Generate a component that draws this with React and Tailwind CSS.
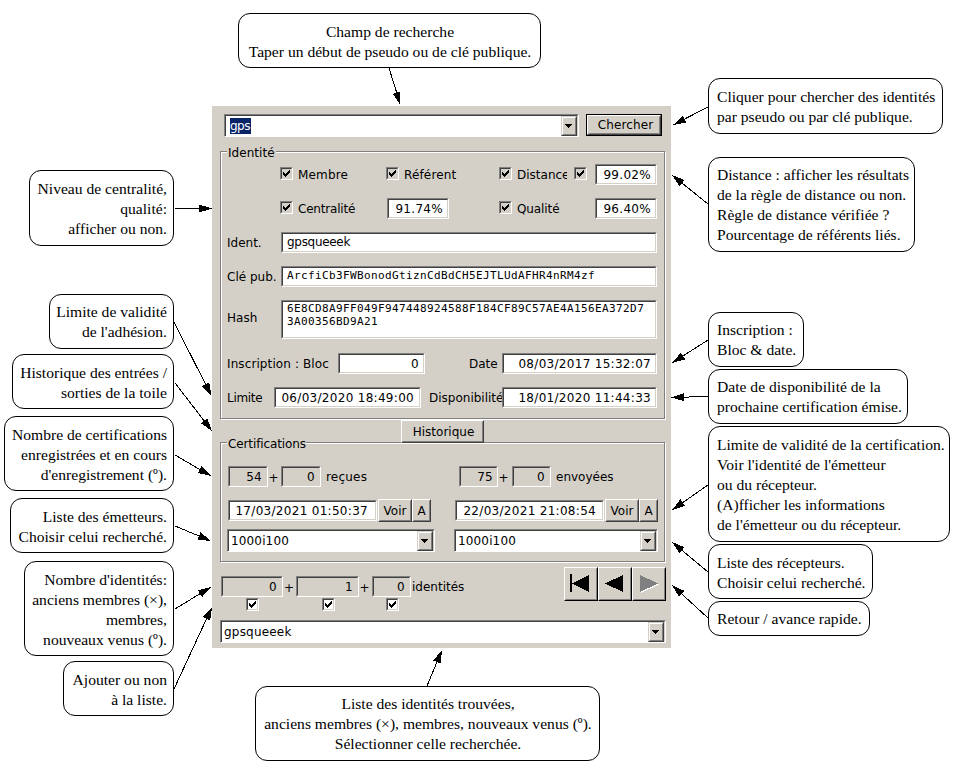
import React from "react";

function Callout({ lines, className }) {
  return (
    <div
      className={`shrink-0 rounded-[12px] border border-black bg-white font-['Liberation_Serif',serif] text-[15.6px] leading-[20px] whitespace-nowrap ${className}`}
    >
      {lines.map((line) => (
        <div key={line}>{line}</div>
      ))}
    </div>
  );
}

function Arrow({ from, to }) {
  const [x1, y1] = from;
  const [x2, y2] = to;
  const len = Math.hypot(x2 - x1, y2 - y1);
  const ux = (x2 - x1) / len;
  const uy = (y2 - y1) / len;
  const bx = x2 - ux * 13;
  const by = y2 - uy * 13;
  const points = `${x2},${y2} ${bx - uy * 4},${by + ux * 4} ${bx + uy * 4},${by - ux * 4}`;
  return (
    <g>
      <line x1={x1} y1={y1} x2={bx} y2={by} stroke="black" strokeWidth="1" />
      <polygon points={points} fill="black" />
    </g>
  );
}

const SUNKEN =
  "border border-t-[#808080] border-l-[#808080] border-r-white border-b-white";
const SUNKEN_INNER =
  "h-full w-full border border-t-[#404040] border-l-[#404040] border-r-[#d4d0c8] border-b-[#d4d0c8]";

function Field({ children, className = "", inner = "" }) {
  return (
    <div className={`shrink-0 ${SUNKEN} ${className}`}>
      <div className={`${SUNKEN_INNER} overflow-hidden whitespace-nowrap ${inner}`}>{children}</div>
    </div>
  );
}

function Check({ className = "bg-white" }) {
  return (
    <div className={`h-[13px] w-[13px] shrink-0 overflow-hidden ${SUNKEN} ${className}`}>
      <div className={SUNKEN_INNER}>
        <svg width="9" height="9" viewBox="0 0 9 9" shapeRendering="crispEdges" className="block">
          <path
            d="M1 3h1v3h-1zM2 4h1v3h-1zM3 5h1v3h-1zM4 4h1v3h-1zM5 3h1v3h-1zM6 2h1v3h-1zM7 1h1v3h-1z"
            fill="black"
          />
        </svg>
      </div>
    </div>
  );
}

function Combo({ children, className = "" }) {
  return (
    <div className={`shrink-0 bg-white ${SUNKEN} border-b-[#d4d0c8] ${className}`}>
      <div className="flex h-full items-center justify-between border-t border-r border-l border-t-[#404040] border-r-[#d4d0c8] border-l-[#404040] pl-[2px]">
        {children}
        <div className="h-full w-[16px] shrink-0 border border-t-[#d4d0c8] border-r-[#404040] border-b-[#404040] border-l-[#d4d0c8] bg-[#d4d0c8]">
          <div className="flex h-full w-full items-center justify-center border border-t-white border-r-[#808080] border-b-[#808080] border-l-white pr-[2px]">
            <svg width="7" height="4" viewBox="0 0 7 4" shapeRendering="crispEdges" className="shrink-0">
              <path d="M0 0h7v1h-7zM1 1h5v1h-5zM2 2h3v1h-3zM3 3h1v1h-1z" fill="black" />
            </svg>
          </div>
        </div>
      </div>
    </div>
  );
}

function Button({ children, className = "" }) {
  return (
    <div
      className={`shrink-0 border border-t-white border-r-[#404040] border-b-[#404040] border-l-white bg-[#d4d0c8] ${className}`}
    >
      <div className="flex h-full w-full items-center justify-center border border-t-[#d4d0c8] border-r-[#808080] border-b-[#808080] border-l-[#d4d0c8] whitespace-nowrap">
        {children}
      </div>
    </div>
  );
}

function Group({ title, titleClass, className, children }) {
  return (
    <div
      className={`relative border border-[#808080] shadow-[1px_1px_0_white,inset_1px_1px_0_white] ${className}`}
    >
      <div
        className={`absolute left-[6px] top-[-7px] h-[16px] bg-[#d4d0c8] pl-px leading-[16px] whitespace-nowrap ${titleClass}`}
      >
        {title}
      </div>
      {children}
    </div>
  );
}

const LABEL = "shrink-0 whitespace-nowrap";
const NUM = "tracking-[0.3px] flex items-center justify-end";

function Window() {
  return (
    <div className="mt-[38px] h-[542px] w-[459px] bg-[#d4d0c8] pt-[8px] pl-[8px] font-['DejaVu_Sans',sans-serif] text-[12px] leading-[16px] text-black">
      <div className="flex pl-[4px]">
        <Combo className="h-[23px] w-[355px]">
          <span className="ml-[2px] w-[21px] bg-[#0a246a] tracking-[-0.5px] text-white">gps</span>
          <span className="grow" />
        </Combo>
        <div className="ml-[7px] h-[22px] w-[76px] border border-black">
          <Button className="h-full w-full">
            <span className="ml-[3px] tracking-[0.1px]">Chercher</span>
          </Button>
        </div>
      </div>

      <Group title="Identité" titleClass="w-[49px] tracking-[0.05px]" className="mt-[14px] h-[268px] w-[445px] pt-[12px]">
        <div className="flex h-[21px] items-center pl-[59px]">
          <Check className="mt-[-2px] bg-[#d4d0c8]" />
          <span className={`${LABEL} ml-[5px] w-[88px] tracking-[0.15px]`}>Membre</span>
          <Check className="mt-[-2px] bg-[#d4d0c8]" />
          <span className={`${LABEL} ml-[5px] w-[95px] tracking-[0.15px]`}>Référent</span>
          <Check className="mt-[-2px]" />
          <span className={`${LABEL} ml-[5px] w-[50px] overflow-hidden`}>Distance</span>
          <Check className="mt-[-2px] ml-[7px] bg-[#d4d0c8]" />
          <Field className="ml-[8px] h-[21px] w-[62px] bg-white" inner={`${NUM} pr-[4px]`}>99.02%</Field>
        </div>
        <div className="mt-[13px] flex h-[21px] items-center pl-[59px]">
          <Check className="mt-[-2px]" />
          <span className={`${LABEL} ml-[5px] w-[89px] tracking-[-0.2px]`}>Centralité</span>
          <Field className="h-[21px] w-[62px] bg-white" inner={`${NUM} pr-[4px]`}>91.74%</Field>
          <Check className="mt-[-2px] ml-[50px]" />
          <span className={`${LABEL} ml-[5px] w-[78px] tracking-[-0.1px]`}>Qualité</span>
          <Field className="h-[21px] w-[62px] bg-white" inner={`${NUM} pr-[4px]`}>96.40%</Field>
        </div>
        <div className="mt-[13px] flex h-[21px] items-center pl-[6px]">
          <span className={`${LABEL} w-[54px] pt-px`}>Ident.</span>
          <Field className="h-[21px] w-[376px] bg-white" inner="pl-[4px] tracking-[-0.3px]">gpsqueeek</Field>
        </div>
        <div className="mt-[13px] flex h-[21px] items-center pl-[6px]">
          <span className={`${LABEL} w-[54px] pt-px`}>Clé pub.</span>
          <Field
            className="h-[21px] w-[376px] bg-white"
            inner="pl-[4px] font-['DejaVu_Sans_Mono',monospace] text-[11px] leading-[15px] tracking-[0.38px]"
          >
            ArcfiCb3FWBonodGtiznCdBdCH5EJTLUdAFHR4nRM4zf
          </Field>
        </div>
        <div className="mt-[13px] flex h-[39px] items-center pl-[6px]">
          <span className={`${LABEL} mt-[-3px] w-[54px]`}>Hash</span>
          <Field
            className="h-[39px] w-[376px] bg-white"
            inner="pl-[4px] font-['DejaVu_Sans_Mono',monospace] text-[11px] leading-[13px] tracking-[0.38px]"
          >
            <div>6E8CD8A9FF049F947448924588F184CF89C57AE4A156EA372D7</div>
            <div>3A00356BD9A21</div>
          </Field>
        </div>
        <div className="mt-[14px] flex h-[21px] items-center pl-[6px]">
          <span className={`${LABEL} w-[111px] pt-px tracking-[0.1px]`}>Inscription : Bloc</span>
          <Field className="h-[21px] w-[87px] bg-white" inner={`${NUM} pr-[4px]`}>0</Field>
          <span className={`${LABEL} ml-[44px] w-[33px] pt-px`}>Date</span>
          <Field className="h-[21px] w-[155px] bg-white" inner={`${NUM} pr-[4px]`}>08/03/2017 15:32:07</Field>
        </div>
        <div className="mt-[13px] flex h-[21px] items-center pl-[6px]">
          <span className={`${LABEL} w-[47px] tracking-[-0.3px] pt-px`}>Limite</span>
          <Field className="h-[21px] w-[147px] bg-white" inner={`${NUM} pr-[5px]`}>06/03/2020 18:49:00</Field>
          <span className={`${LABEL} ml-[8px] w-[73px] overflow-hidden pt-px`}>Disponibilité</span>
          <Field className="h-[21px] w-[155px] bg-white" inner={`${NUM} pr-[4px]`}>18/01/2020 11:44:33</Field>
        </div>
      </Group>

      <div className="relative z-10 mt-px ml-[181px] h-[23px] w-[83px]">
        <Button className="h-full w-full">
          <span className="ml-[2px]">Historique</span>
        </Button>
      </div>

      <Group title="Certifications" titleClass="w-[79px] tracking-[-0.12px]" className="mt-[-1px] h-[120px] w-[445px] pt-[23px]">
        <div className="flex h-[21px] items-center pl-[7px]">
          <Field className="h-[21px] w-[40px]" inner={`${NUM} pr-[4px]`}>54</Field>
          <span className={`${LABEL} w-[11px] pt-[2px] text-center`}>+</span>
          <Field className="ml-[2px] h-[21px] w-[40px]" inner={`${NUM} pr-[4px]`}>0</Field>
          <span className={`${LABEL} ml-[5px] w-[133px] pt-px tracking-[0.2px]`}>reçues</span>
          <Field className="h-[21px] w-[39px]" inner={`${NUM} pr-[3px]`}>75</Field>
          <span className={`${LABEL} w-[11px] pt-[2px] text-center`}>+</span>
          <Field className="ml-[3px] h-[21px] w-[39px]" inner={`${NUM} pr-[4px]`}>0</Field>
          <span className={`${LABEL} ml-[5px] pt-px`}>envoyées</span>
        </div>
        <div className="mt-[12px] flex h-[23px] items-center pl-[7px]">
          <Field className="h-[21px] w-[149px] bg-white" inner={`${NUM} pr-[7px]`}>17/03/2021 01:50:37</Field>
          <Button className="ml-px h-[23px] w-[34px]">Voir</Button>
          <Button className="h-[23px] w-[19px]">A</Button>
          <Field className="ml-[24px] h-[21px] w-[149px] bg-white" inner={`${NUM} pr-[6px]`}>22/03/2021 21:08:54</Field>
          <Button className="ml-px h-[23px] w-[34px]">Voir</Button>
          <Button className="h-[23px] w-[19px]">A</Button>
        </div>
        <div className="mt-[7px] flex pl-[6px]">
          <Combo className="h-[23px] w-[208px]">
            <span className="tracking-[0.15px]">1000i100</span>
          </Combo>
          <Combo className="ml-[19px] h-[23px] w-[204px]">
            <span className="tracking-[0.15px]">1000i100</span>
          </Combo>
        </div>
      </Group>

      <div className="mt-[5px] flex h-[53px] pl-px">
        <div className="w-[343px] pt-[9px]">
          <div className="flex h-[21px] items-center">
            <Field className="h-[21px] w-[62px]" inner={`${NUM} pr-[4px]`}>0</Field>
            <span className={`${LABEL} w-[12px] pt-[2px] text-center`}>+</span>
            <Field className="ml-px h-[21px] w-[63px]" inner={`${NUM} pr-[4px]`}>1</Field>
            <span className={`${LABEL} w-[11px] pt-[2px] text-center`}>+</span>
            <Field className="ml-[2px] h-[21px] w-[39px]" inner={`${NUM} pr-[4px]`}>0</Field>
            <span className={`${LABEL} ml-px pt-px`}>identités</span>
          </div>
          <div className="mt-px flex pl-[25px]">
            <Check />
            <Check className="ml-[63px] bg-white" />
            <Check className="ml-[51px] bg-white" />
          </div>
        </div>
        <div className="flex h-[34px]">
          <Button className="h-[34px] w-[34px] border-r-black border-b-black">
            <svg width="30" height="30" shapeRendering="crispEdges">
              <path d="M4 5h2v18h-2zM6 14.5L23 6v17z" fill="black" />
            </svg>
          </Button>
          <Button className="h-[34px] w-[34px] border-r-black border-b-black">
            <svg width="30" height="30" shapeRendering="crispEdges">
              <path d="M5 14.5L23 6v17z" fill="black" />
            </svg>
          </Button>
          <Button className="h-[34px] w-[34px] border-r-black border-b-black">
            <svg width="30" height="30" shapeRendering="crispEdges">
              <path d="M7 7v17L25 15.5z" fill="white" />
              <path d="M6 6v17L24 14.5z" fill="#808080" />
            </svg>
          </Button>
        </div>
      </div>
      <Combo className="h-[23px] w-[446px]">
        <span className="tracking-[0.2px]">gpsqueeek</span>
      </Combo>
    </div>
  );
}

const ARROWS = [
  [[389, 68], [400.5, 105]],
  [[427, 686], [442, 650]],
  [[175, 208.5], [212, 208.5]],
  [[174, 322], [211.5, 396]],
  [[175, 383], [212, 431]],
  [[175, 455], [211, 476]],
  [[175, 526], [211, 541]],
  [[175, 609], [211, 587]],
  [[174, 689], [212, 607]],
  [[708, 107], [673, 125]],
  [[708, 204], [672, 175]],
  [[708, 340], [672, 363]],
  [[708, 396.5], [671, 397.5]],
  [[708, 485], [672, 510]],
  [[708, 572], [672, 542]],
  [[708, 618], [672, 585]],
];

export default function App() {
  return (
    <div className="relative flex h-[774px] w-[955px] overflow-hidden bg-white text-black">
      <div className="flex w-[174px] shrink-0 flex-col items-end pt-[170px] text-right">
        <Callout className="h-[76px] w-[145px] pt-[8px] pr-[6px]" lines={["Niveau de centralité,", "qualité:", "afficher ou non."]} />
        <Callout className="mt-[48px] h-[55px] w-[125px] pt-[7px] pr-[6px]" lines={["Limite de validité", "de l'adhésion."]} />
        <Callout className="mt-[5px] h-[55px] w-[162px] pt-[8px] pr-[6px]" lines={["Historique des entrées /", "sorties de la toile"]} />
        <Callout className="mt-[7px] h-[75px] w-[170px] pt-[8px] pr-[6px]" lines={["Nombre de certifications", "enregistrées et en cours", "d'enregistrement (º)."]} />
        <Callout className="mt-[7px] h-[55px] w-[164px] pt-[8px] pr-[6px]" lines={["Liste des émetteurs.", "Choisir celui recherché."]} />
        <Callout className="mt-[8px] h-[95px] w-[150px] pt-[8px] pr-[6px]" lines={["Nombre d'identités:", "anciens membres (×),", "membres,", "nouveaux venus (º)."]} />
        <Callout className="mt-[5px] h-[55px] w-[111px] pt-[8px] pr-[6px]" lines={["Ajouter ou non", "à la liste."]} />
      </div>

      <div className="ml-[38px] w-[459px] shrink-0 pt-[13px]">
        <Callout className="ml-[26px] h-[55px] w-[303px] pt-[8px] pl-px text-center" lines={["Champ de recherche", "Taper un début de pseudo ou de clé publique."]} />
        <Window />
        <Callout className="mt-[38px] ml-[43px] h-[75px] w-[345px] pt-[7px] pl-px text-center" lines={["Liste des identités trouvées,", "anciens membres (×), membres, nouveaux venus (º).", "Sélectionner celle recherchée."]} />
      </div>

      <div className="ml-[37px] flex w-[247px] shrink-0 flex-col items-start pt-[78px]">
        <Callout className="h-[56px] w-[235px] pt-[8px] pl-[8px]" lines={["Cliquer pour chercher des identités", "par pseudo ou par clé publique."]} />
        <Callout className="mt-[23px] h-[95px] w-[207px] pt-[7px] pl-[8px]" lines={["Distance : afficher les résultats", "de la règle de distance ou non.", "Règle de distance vérifiée ?", "Pourcentage de référents liés."]} />
        <Callout className="mt-[60px] h-[55px] w-[96px] pt-[7px] pl-[8px]" lines={["Inscription :", "Bloc & date."]} />
        <Callout className="mt-[2px] h-[55px] w-[200px] pt-[7px] pl-[8px]" lines={["Date de disponibilité de la", "prochaine certification émise."]} />
        <Callout className="mt-[2px] h-[116px] w-[242px] pt-[8px] pl-[8px]" lines={["Limite de validité de la certification.", "Voir l'identité de l'émetteur", "ou du récepteur.", "(A)fficher les informations", "de l'émetteur ou du récepteur."]} />
        <Callout className="mt-[2px] h-[55px] w-[165px] pt-[8px] pl-[8px]" lines={["Liste des récepteurs.", "Choisir celui recherché."]} />
        <Callout className="mt-[2px] h-[35px] w-[162px] pt-[7px] pl-[8px]" lines={["Retour / avance rapide."]} />
      </div>

      <svg className="pointer-events-none absolute inset-0" width="955" height="774" shapeRendering="crispEdges">
        {ARROWS.map(([from, to]) => (
          <Arrow key={from.join()} from={from} to={to} />
        ))}
      </svg>
    </div>
  );
}
